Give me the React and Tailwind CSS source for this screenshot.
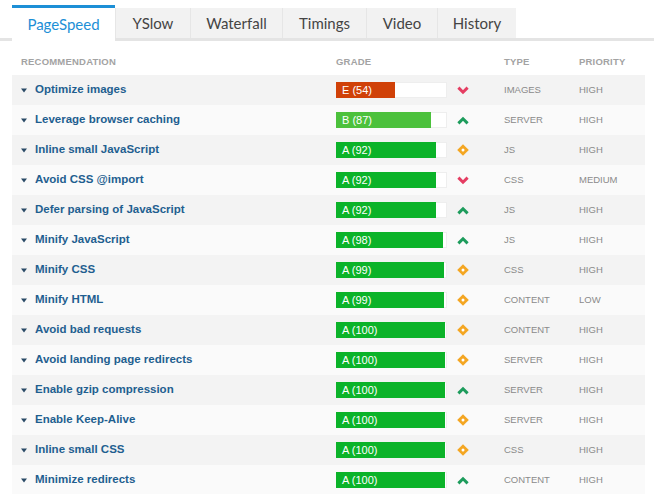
import React from "react";

const rows = [
  ["Optimize images", "E", 54, "down", "IMAGES", "HIGH"],
  ["Leverage browser caching", "B", 87, "up", "SERVER", "HIGH"],
  ["Inline small JavaScript", "A", 92, "dot", "JS", "HIGH"],
  ["Avoid CSS @import", "A", 92, "down", "CSS", "MEDIUM"],
  ["Defer parsing of JavaScript", "A", 92, "up", "JS", "HIGH"],
  ["Minify JavaScript", "A", 98, "up", "JS", "HIGH"],
  ["Minify CSS", "A", 99, "dot", "CSS", "HIGH"],
  ["Minify HTML", "A", 99, "dot", "CONTENT", "LOW"],
  ["Avoid bad requests", "A", 100, "dot", "CONTENT", "HIGH"],
  ["Avoid landing page redirects", "A", 100, "dot", "SERVER", "HIGH"],
  ["Enable gzip compression", "A", 100, "up", "SERVER", "HIGH"],
  ["Enable Keep-Alive", "A", 100, "dot", "SERVER", "HIGH"],
  ["Inline small CSS", "A", 100, "dot", "CSS", "HIGH"],
  ["Minimize redirects", "A", 100, "up", "CONTENT", "HIGH"],
];

const gradeColor = { E: "#d04108", B: "#4cc13c", A: "#0bb329" };

function Icon({ kind }) {
  if (kind === "down")
    return (
      <svg width="12" height="9" viewBox="0 0 12 9">
        <path d="M1.4 1.6 L6 6.2 L10.6 1.6" fill="none" stroke="#e53d62" strokeWidth="3" />
      </svg>
    );
  if (kind === "up")
    return (
      <svg width="12" height="9" viewBox="0 0 12 9">
        <path d="M1.4 7.4 L6 2.8 L10.6 7.4" fill="none" stroke="#1d9c5c" strokeWidth="3" />
      </svg>
    );
  return (
    <svg width="12" height="12" viewBox="0 0 12 12">
      <path d="M6 0.2 L11.8 6 L6 11.8 L0.2 6 Z" fill="#f4a622" />
      <circle cx="6" cy="6" r="1.5" fill="#fff" />
    </svg>
  );
}

const tabs = [
  ["YSlow", "w-[75px]"],
  ["Waterfall", "w-[92px]"],
  ["Timings", "w-[84px]"],
  ["Video", "w-[71px]"],
  ["History", "w-[79px]"],
];

export default function App() {
  return (
    <div className="w-[654px] h-[494px] bg-white overflow-hidden" style={{ fontFamily: "'Liberation Sans', Arial, sans-serif" }}>
      <div className="pt-[5px] flex items-end border-b-[3px] border-[#e4e4e4] pl-[12px] h-[41px]">
        <div
          className="w-[103px] h-[36px] -mb-[3px] bg-white border-t-[3px] border-[#1d8fd6] flex items-center justify-center text-[15px] text-[#1d8fd6]"
          style={{ fontFamily: "Lato, sans-serif" }}
        >
          PageSpeed
        </div>
        {tabs.map(([t, w]) => (
          <div
            key={t}
            className={`${w} h-[30px] bg-[#f2f2f2] border-l border-[#e6e6e6] flex items-center justify-center text-[15px] text-[#444]`}
            style={{ fontFamily: "Lato, sans-serif" }}
          >
            {t}
          </div>
        ))}
      </div>
      <div className="ml-[12px] w-[633px]">
        <div className="grid grid-cols-[324px_111px_57px_75px_1fr] h-[34px] items-center pt-[9px] text-[9.5px] font-bold text-[#a3a3a3] tracking-[0.2px]">
          <div className="pl-[9px]">RECOMMENDATION</div>
          <div>GRADE</div>
          <div></div>
          <div>TYPE</div>
          <div>PRIORITY</div>
        </div>
        {rows.map(([name, g, score, icon, type, prio], i) => (
          <div
            key={name}
            className={`grid grid-cols-[324px_111px_57px_75px_1fr] h-[30px] items-center ${i % 2 === 0 ? "bg-[#f3f3f3]" : "bg-[#fafafa]"}`}
          >
            <div className="flex items-center pl-[9px]">
              <svg width="6" height="5" viewBox="0 0 6 5" className="mr-[8px]">
                <path d="M0 0.5 L6 0.5 L3 4.5 Z" fill="#2a4a66" />
              </svg>
              <span className="text-[11.5px] font-bold text-[#1f5f90]">{name}</span>
            </div>
            <div className="h-[16px] bg-white border border-[#eeeeee]">
              <div
                className="h-[16px] flex items-center pl-[6px] text-[11px] text-white -m-px"
                style={{ width: `${score}%`, background: gradeColor[g] }}
              >
                {g} ({score})
              </div>
            </div>
            <div className="pl-[10px] flex items-center">
              <Icon kind={icon} />
            </div>
            <div className="text-[9.5px] text-[#8a8a8a]">{type}</div>
            <div className="text-[9.5px] text-[#8a8a8a]">{prio}</div>
          </div>
        ))}
      </div>
    </div>
  );
}
